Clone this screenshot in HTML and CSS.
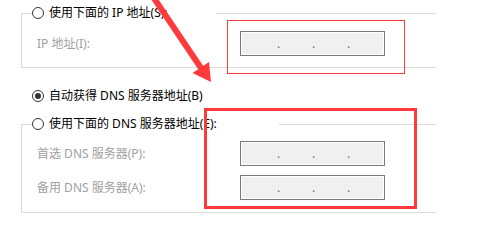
FILE: index.html
```html
<!DOCTYPE html>
<html lang="zh-CN">
<head>
<meta charset="utf-8">
<title>DNS 设置</title>
<link rel="stylesheet" href="styles.css">
</head>
<body>
<div class="page">
  <div class="group g1">
    <div class="legend legend-ip"><span class="radio"></span><span class="lbl">使用下面的 IP 地址(S):</span></div>
    <div class="field f-ip">
      <span class="flabel">IP 地址(I):</span>
      <div class="ipbox"><span>.</span><span>.</span><span>.</span></div>
    </div>
  </div>
  <div class="option"><span class="radio checked"></span><span class="lbl">自动获得 DNS 服务器地址(B)</span></div>
  <div class="group g2">
    <div class="legend legend-dns"><span class="radio"></span><span class="lbl">使用下面的 DNS 服务器地址(E):</span></div>
    <div class="field f-dns1">
      <span class="flabel">首选 DNS 服务器(P):</span>
      <div class="ipbox"><span>.</span><span>.</span><span>.</span></div>
    </div>
    <div class="field f-dns2">
      <span class="flabel">备用 DNS 服务器(A):</span>
      <div class="ipbox"><span>.</span><span>.</span><span>.</span></div>
    </div>
  </div>
  <div class="mark mark-thin"></div>
  <div class="mark mark-thick"></div>
  <svg class="arrow" width="479" height="237" viewBox="0 0 479 237">
    <line x1="152.5" y1="-4" x2="201" y2="68" stroke="#ff3a3a" stroke-width="6"/>
    <polygon points="192.5,73 209,62 211,82" fill="#ff3a3a"/>
  </svg>
</div>
</body>
</html>
```
FILE: styles.css
```css
html, body {
  margin: 0;
  background: #fff;
}
body {
  font-family: "Noto Sans", "Noto Sans CJK SC", sans-serif;
  font-size: 12px;
  line-height: 16px;
  color: #000;
}
.page {
  position: relative;
  width: 479px;
  height: 237px;
  overflow: hidden;
  padding: 13px 0 0 21px;
  box-sizing: border-box;
}
.group {
  width: 415px;
  border: 1px solid #dcdcdc;
  border-right: none;
  box-sizing: border-box;
}
.g1 { padding-bottom: 11px; }
.g2 { margin-top: 20px; padding-bottom: 12px; }
.legend {
  display: flex;
  align-items: center;
  gap: 5px;
  height: 16px;
  margin: -9px 0 0 10px;
  background: #fff;
}
.legend-ip { width: 184px; }
.legend-dns { width: 247px; }
.radio {
  position: relative;
  flex: none;
  width: 12px;
  height: 12px;
  border: 1px solid #333;
  border-radius: 50%;
  box-sizing: border-box;
  background: #fff;
}
.radio.checked::after {
  content: "";
  position: absolute;
  left: 2px;
  top: 2px;
  width: 6px;
  height: 6px;
  border-radius: 50%;
  background: #333;
}
.lbl { white-space: nowrap; }
.option {
  display: flex;
  align-items: center;
  gap: 5px;
  height: 16px;
  margin-top: 20px;
  padding-left: 11px;
}
.field {
  display: flex;
  align-items: center;
  padding-left: 15px;
}
.f-ip { margin-top: 10px; }
.f-dns1 { margin-top: 9px; }
.f-dns2 { margin-top: 9px; }
.flabel {
  flex: none;
  width: 203px;
  color: #a0a0a0;
  white-space: nowrap;
}
.ipbox {
  display: flex;
  align-items: center;
  width: 145px;
  height: 25px;
  box-sizing: border-box;
  padding-left: 20px;
  border: 1px solid #7a7a7a;
  background: #f0f0f0;
  box-shadow: inset 0 0 0 1px #fff;
}
.ipbox span {
  width: 35px;
  text-align: center;
  color: #6a6a8a;
}
.mark {
  position: absolute;
  box-sizing: border-box;
  border-style: solid;
  border-color: #ff3a3a;
}
.mark-thin {
  left: 227px;
  top: 20px;
  width: 178px;
  height: 54px;
  border-width: 1px;
}
.mark-thick {
  left: 204px;
  top: 108px;
  width: 213px;
  height: 101px;
  border-width: 3px;
}
.arrow {
  position: absolute;
  left: 0;
  top: 0;
  pointer-events: none;
}
```
